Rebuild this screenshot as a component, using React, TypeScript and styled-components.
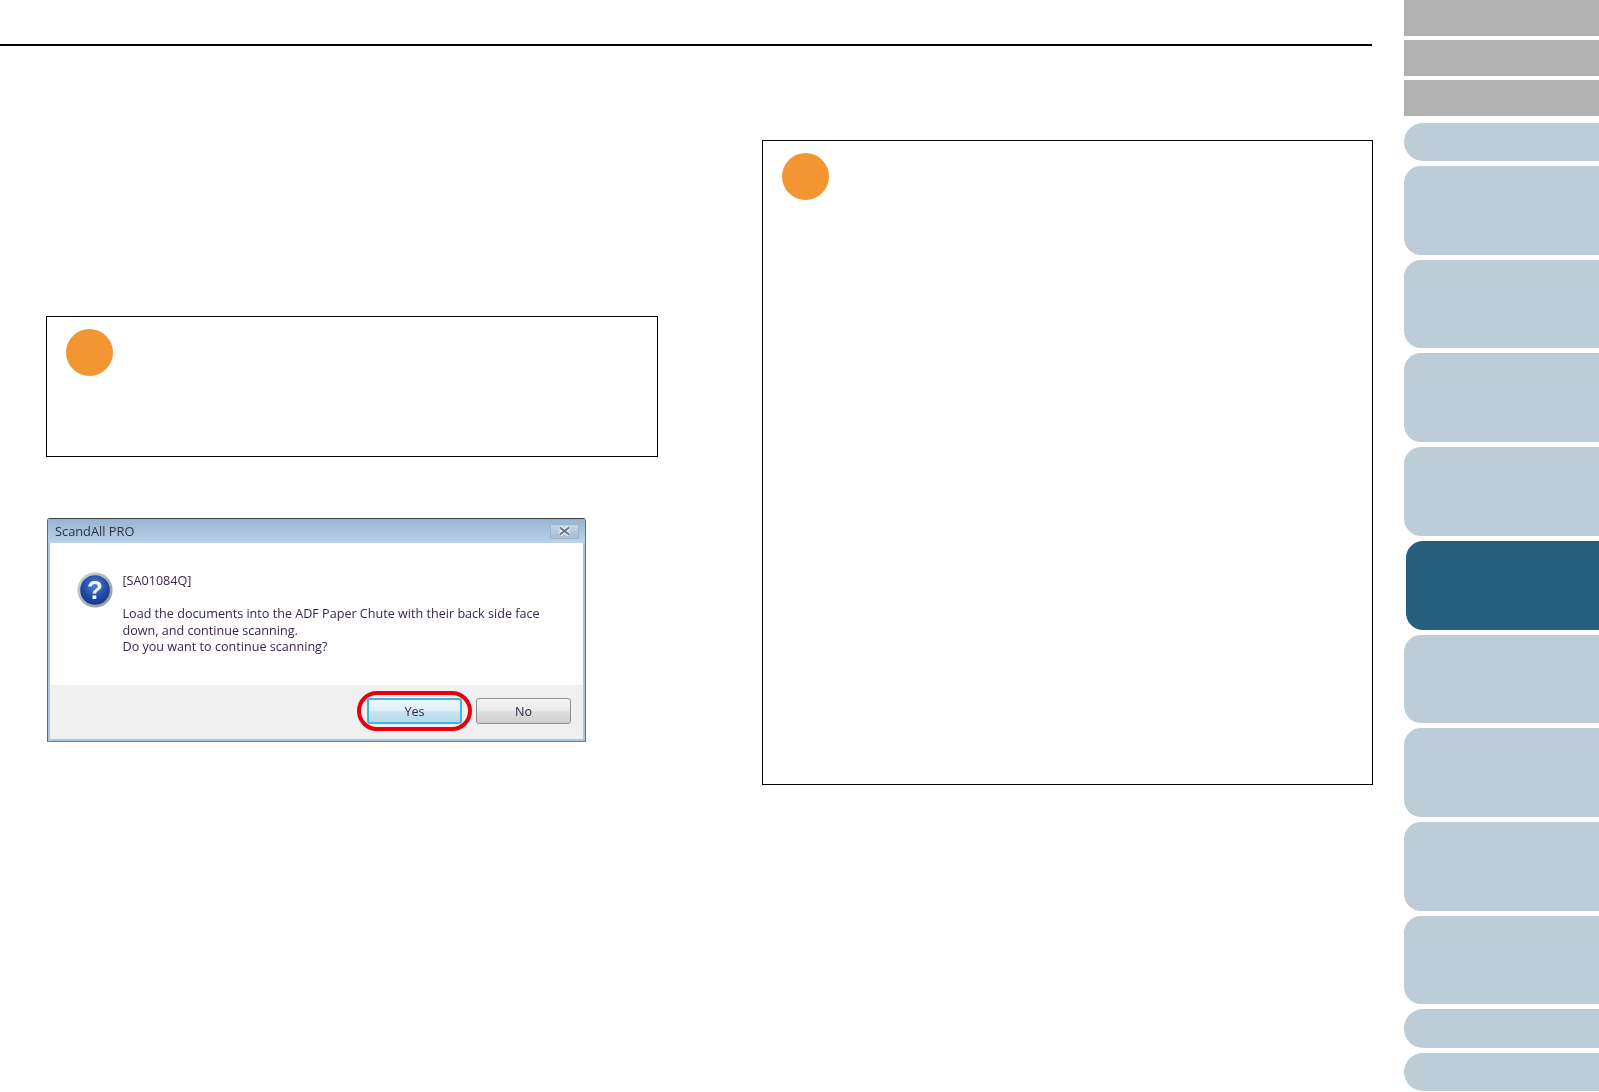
import React from "react";
import styled, { createGlobalStyle } from "styled-components";

const Global = createGlobalStyle`
  html, body { margin: 0; padding: 0; background: #fff; }
  body { font-family: "Open Sans", "Noto Sans", sans-serif; overflow: hidden; }
`;

const Page = styled.div`
  display: flex;
  width: 1599px;
  height: 1092px;
  overflow: hidden;
  background: #fff;
`;

const Main = styled.main`
  width: 1372px;
  flex: none;
  display: flex;
  flex-direction: column;
`;

const TopRule = styled.div`
  height: 2.5px;
  margin-top: 43.5px;
  background: #000;
`;

const Columns = styled.div`
  display: grid;
  grid-template-columns: 612px 611px;
  column-gap: 103.5px;
  align-items: start;
  padding: 93.5px 0 0 46px;
`;

const LeftColumn = styled.div`
  display: flex;
  flex-direction: column;
  padding-top: 176.5px;
`;

const NoteBox = styled.section<{ $height: number }>`
  box-sizing: border-box;
  height: ${(p) => p.$height}px;
  border: 1px solid #000;
  padding: 12px 19px;
`;

const Badge = styled.div`
  width: 47px;
  height: 47px;
  border-radius: 50%;
  background: #f39533;
`;

const Dialog = styled.div`
  position: relative;
  box-sizing: border-box;
  width: 539px;
  height: 224px;
  margin: 61px 0 0 1px;
  display: flex;
  flex-direction: column;
  border: 1px solid #5b6b78;
  border-top-color: #3c4148;
  border-right-color: #3d7f98;
  border-bottom-color: #3f93b4;
  border-radius: 3px 3px 0 0;
  background: #a9c5df;
  padding: 0 2px 2px 2px;
  filter: blur(0.35px);
`;

const TitleBar = styled.div`
  flex: none;
  height: 24px;
  margin: 0 -2px;
  padding: 0 6px 0 7px;
  display: flex;
  align-items: center;
  justify-content: space-between;
  background: linear-gradient(#98b4d0, #bad2ea);
  font-size: 12.8px;
  color: #2c3340;
`;

const CloseButton = styled.div`
  box-sizing: border-box;
  width: 29px;
  height: 15px;
  display: flex;
  align-items: center;
  justify-content: center;
  border: 1px solid #9fb2c6;
  border-radius: 2px;
  background: linear-gradient(#c4d5e6, #a6bdd4);
`;

const DialogBody = styled.div`
  flex: 1;
  display: flex;
  align-items: flex-start;
  gap: 9.5px;
  padding: 29px 0 0 27px;
  background: #fff;
`;

const MessageText = styled.div`
  margin-top: 1px;
  font-size: 12.6px;
  line-height: 16.6px;
  color: #3a2450;
  white-space: nowrap;
`;

const MessageLine = styled.div<{ $gap?: boolean }>`
  margin-top: ${(p) => (p.$gap ? 16.6 : 0)}px;
`;

const Footer = styled.div`
  box-sizing: border-box;
  flex: none;
  height: 54px;
  display: flex;
  justify-content: flex-end;
  align-items: flex-start;
  gap: 14px;
  padding: 13px 12px 0 0;
  background: #f0f0f0;
`;

const DialogButton = styled.div<{ $primary?: boolean }>`
  box-sizing: border-box;
  width: ${(p) => (p.$primary ? 95 : 95)}px;
  height: 26px;
  display: flex;
  align-items: center;
  justify-content: center;
  font-size: 12.6px;
  color: #33264a;
  border-radius: 3px;
  border: ${(p) => (p.$primary ? "2px solid #3fb6e4" : "1px solid #8f8f8f")};
  background: ${(p) =>
    p.$primary
      ? "linear-gradient(#ecf7fd 0%, #dff0fa 48%, #c9e4f2 54%, #b6d9ea 100%)"
      : "linear-gradient(#f4f4f4 0%, #ebebeb 48%, #dddddd 54%, #d0d0d0 100%)"};
`;

const RedOval = styled.div`
  position: absolute;
  left: 309px;
  top: 171.5px;
  width: 114.5px;
  height: 40.5px;
  box-sizing: border-box;
  border: 4px solid #e8000f;
  border-radius: 21px;
  pointer-events: none;
`;

const Sidebar = styled.nav`
  margin-left: 32px;
  width: 195px;
  flex: none;
  display: flex;
  flex-direction: column;
  gap: 5px;
`;

const GreyGroup = styled.div`
  flex: none;
  display: flex;
  flex-direction: column;
  gap: 4px;
  margin-bottom: 1.7px;
`;

const GreyTab = styled.div`
  height: 36px;
  background: #b2b2b2;
`;

const ChapterTab = styled.div<{ $tall?: boolean; $active?: boolean }>`
  height: ${(p) => (p.$tall ? 88.7 : 38.4)}px;
  flex: none;
  margin-left: ${(p) => (p.$active ? 1.7 : 0)}px;
  border-radius: ${(p) => (p.$tall ? "17px" : "19px")} 0 0 ${(p) => (p.$tall ? "17px" : "19px")};
  background: ${(p) => (p.$active ? "#265e7d" : "#bdcdd8")};
`;

const QuestionIcon = () => (
  <svg width="36" height="36" viewBox="0 0 36 36" style={{ flex: "none" }}>
    <defs>
      <radialGradient id="qb" cx="0.5" cy="0.35" r="0.75">
        <stop offset="0" stopColor="#4f7fd4" />
        <stop offset="0.55" stopColor="#1f4aa6" />
        <stop offset="1" stopColor="#14307c" />
      </radialGradient>
      <linearGradient id="qr" x1="0" y1="0" x2="1" y2="1">
        <stop offset="0" stopColor="#d2d6da" />
        <stop offset="1" stopColor="#8b9299" />
      </linearGradient>
    </defs>
    <circle cx="18" cy="18" r="17.6" fill="url(#qr)" />
    <circle cx="18" cy="18" r="14.8" fill="url(#qb)" />
    <text
      x="18"
      y="27"
      textAnchor="middle"
      fontFamily="'Liberation Sans', sans-serif"
      fontWeight="700"
      fontSize="26"
      fill="#f4f6fa"
    >
      ?
    </text>
  </svg>
);

const CloseGlyph = () => (
  <svg width="13" height="10" viewBox="0 0 13 10">
    <path d="M2 1.5 L11 8.5 M11 1.5 L2 8.5" stroke="#eef2f6" strokeWidth="4.4" />
    <path d="M2 1.5 L11 8.5 M11 1.5 L2 8.5" stroke="#6b7a8a" strokeWidth="2.2" />
  </svg>
);

export default function App() {
  const before = 5;
  const after = 3;
  return (
    <Page>
      <Global />
      <Main>
        <TopRule />
        <Columns>
          <LeftColumn>
            <NoteBox $height={141}>
              <Badge />
            </NoteBox>
            <Dialog>
              <TitleBar>
                <span>ScandAll PRO</span>
                <CloseButton>
                  <CloseGlyph />
                </CloseButton>
              </TitleBar>
              <DialogBody>
                <QuestionIcon />
                <MessageText>
                  <MessageLine>[SA01084Q]</MessageLine>
                  <MessageLine $gap>
                    Load the documents into the ADF Paper Chute with their back side face
                  </MessageLine>
                  <MessageLine>down, and continue scanning.</MessageLine>
                  <MessageLine>Do you want to continue scanning?</MessageLine>
                </MessageText>
              </DialogBody>
              <Footer>
                <DialogButton $primary>Yes</DialogButton>
                <DialogButton>No</DialogButton>
              </Footer>
              <RedOval />
            </Dialog>
          </LeftColumn>
          <NoteBox $height={645}>
            <Badge />
          </NoteBox>
        </Columns>
      </Main>
      <Sidebar>
        <GreyGroup>
          <GreyTab />
          <GreyTab />
          <GreyTab />
        </GreyGroup>
        <ChapterTab />
        {Array.from({ length: before - 1 }, (_, i) => (
          <ChapterTab key={`b${i}`} $tall />
        ))}
        <ChapterTab $tall $active />
        {Array.from({ length: after + 1 }, (_, i) => (
          <ChapterTab key={`a${i}`} $tall />
        ))}
        <ChapterTab />
        <ChapterTab />
      </Sidebar>
    </Page>
  );
}
